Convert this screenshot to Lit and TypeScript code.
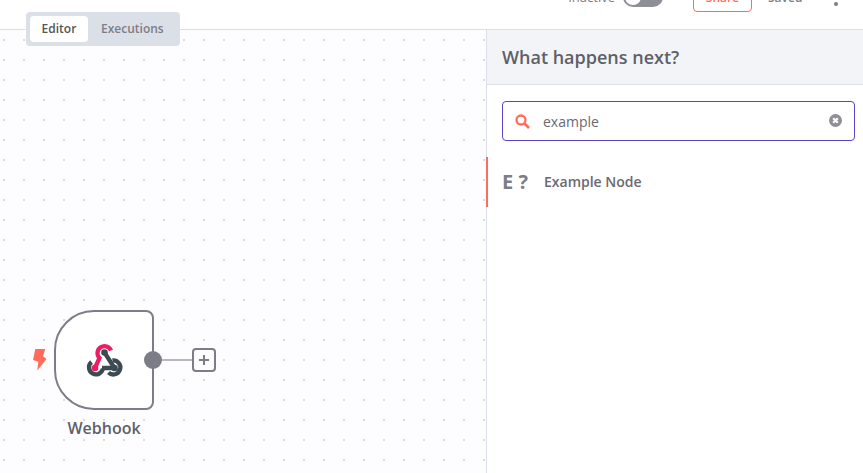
import { LitElement, html, css } from "lit";
import { customElement } from "lit/decorators.js";

@customElement("app-root")
export class AppRoot extends LitElement {
  static styles = css`
    :host { display: block; width: 863px; height: 473px; font-family: "Open Sans", sans-serif; overflow: hidden; position: relative; background: #fff; color: #555; }
    .header { height: 29px; border-bottom: 1px solid #dbdfe7; background: #fff; display: flex; justify-content: flex-end; align-items: flex-end; overflow: hidden; box-sizing: content-box; }
    .hgroup { display: flex; align-items: flex-end; flex: none; }
    .status { font-size: 13px; line-height: 18px; color: #7d7d87; margin-bottom: 23px; font-weight: 400; }
    .toggle { width: 40px; height: 20px; border-radius: 10px; background: #8f8f98; margin-left: 8px; margin-bottom: 22px; position: relative; flex: none; }
    .toggle::after { content: ""; position: absolute; left: 2px; top: 2px; width: 16px; height: 16px; border-radius: 50%; background: #fff; }
    .share { width: 59px; height: 40px; box-sizing: border-box; border: 1px solid #ff6d5a; border-radius: 4px; margin-left: 30px; margin-bottom: 17px; color: #ff6d5a; font-size: 12px; font-weight: 600; display: flex; align-items: flex-end; justify-content: center; line-height: 14px; padding-bottom: 6px; flex: none; }
    .saved { font-size: 12px; font-weight: 600; color: #7d7d87; line-height: 14px; margin-left: 16px; margin-bottom: 24px; width: 36px; flex: none; }
    .dots { width: 4px; height: 4px; border-radius: 50%; background: #7d7d87; margin-left: 30px; margin-right: 25px; margin-bottom: 23px; flex: none; }
    .main { display: flex; height: 443px; }
    .canvas { width: 486px; flex: none; position: relative; background-color: #fdfdff; background-image: radial-gradient(circle at 1px 1px, #d9dbe2 1px, transparent 1.2px); background-size: 20px 20px; background-position: 3px 9px; }
    .tabs { position: absolute; left: 26px; top: 12px; width: 154px; display: flex; padding: 4px; background: #dbdfe7; border-radius: 4px; height: 34px; box-sizing: border-box; z-index: 2; }
    .tab { font-size: 12px; font-weight: 600; line-height: 26px; padding: 0 12px 0 13px; border-radius: 4px; color: #7d7d87; white-space: nowrap; }
    .tab.active { background: #fff; color: #555; width: 58px; padding: 0; text-align: center; flex: none; }
    .node { position: absolute; left: 54px; top: 280px; width: 100px; height: 100px; box-sizing: border-box; border: 2px solid #7d7d87; border-radius: 40px 8px 8px 40px; background: #fff; display: flex; align-items: center; justify-content: center; }
    .node svg { display: block; overflow: visible; }
    .bolt { position: absolute; left: 33px; top: 319px; }
    .handle { position: absolute; left: 144px; top: 321px; width: 18px; height: 18px; border-radius: 50%; background: #7d7d87; }
    .line { position: absolute; left: 162px; top: 329px; width: 31px; height: 2px; background: #b8b8bf; }
    .plus { position: absolute; left: 192px; top: 318px; width: 24px; height: 24px; box-sizing: border-box; border: 2px solid #7d7d87; border-radius: 4px; background: #fdfdff; display: flex; align-items: center; justify-content: center; }
    .label { position: absolute; left: 34px; top: 387px; width: 140px; text-align: center; font-size: 16px; line-height: 22px; font-weight: 600; color: #5f5f68; }
    .panel { flex: 1; border-left: 1px solid #dbdfe7; background: #fff; min-width: 0; }
    .phead { height: 55px; box-sizing: border-box; background: #f3f4f8; border-bottom: 1px solid #dbdfe7; padding: 0 15px; display: flex; align-items: center; font-size: 18px; font-weight: 600; color: #5f5f68; }
    .searchwrap { padding: 16px 8px 16px 15px; }
    .search { height: 40px; box-sizing: border-box; border: 1px solid #5b45c4; border-radius: 4px; display: flex; align-items: center; padding: 0 12px; gap: 13px; font-size: 14px; color: #6a6a72; }
    .search .txt { flex: 1; }
    .search svg { display: block; flex: none; }
    .search .clear { margin-bottom: 2px; }
    .item { height: 50px; display: flex; align-items: center; border-left: 2px solid #ff6d5a; margin-left: -1px; padding: 0 0 2px 14px; box-sizing: border-box; }
    .ic { width: 42px; flex: none; font-size: 20px; font-weight: 700; color: #7d7d87; white-space: pre; }
    .iname { font-size: 14px; font-weight: 600; color: #6a6a72; }
  `;
  render() {
    return html`
      <div class="header">
        <div class="hgroup">
          <span class="status">Inactive</span>
          <span class="toggle"></span>
          <span class="share">Share</span>
          <span class="saved">Saved</span>
          <span class="dots"></span>
        </div>
      </div>
      <div class="tabs">
        <div class="tab active">Editor</div>
        <div class="tab">Executions</div>
      </div>
      <div class="main">
        <div class="canvas">
          <svg class="bolt" width="14" height="22" viewBox="0 0 14 22"><path d="M2.300 0h10L10 7.300 13.500 10 4.300 21.500 5.300 12.700 0 11z" fill="#ff6d5a"/></svg>
          <div class="node">
            <svg width="35" height="32" viewBox="0 0 35 32" fill="none" stroke-width="4.300">
              <path d="M4.500 18A7 7 0 1 0 15.900 24.500" stroke="#3d4a54"/>
              <path d="M25.500 16.500A7 7 0 1 1 21.500 28.500" stroke="#3d4a54"/>
              <path d="M17.500 8.500L27.500 24H15" stroke="#3d4a54"/>
              <circle cx="17.500" cy="8.500" r="3.300" fill="#3d4a54"/>
              <circle cx="27.500" cy="24" r="3.300" fill="#3d4a54"/>
              <path d="M8 24L12.500 14A7 7 0 1 1 24 6.500" stroke="#ea1f63"/>
              <circle cx="8" cy="24" r="3.300" fill="#ea1f63"/>
            </svg>
          </div>
          <div class="handle"></div>
          <div class="line"></div>
          <div class="plus">
            <svg width="12" height="12" viewBox="0 0 12 12"><path d="M6 1v10M1 6h10" stroke="#7d7d87" stroke-width="2"/></svg>
          </div>
          <div class="label">Webhook</div>
        </div>
        <div class="panel">
          <div class="phead">What happens next?</div>
          <div class="searchwrap">
            <div class="search">
              <svg width="15" height="15" viewBox="0 0 15 15" fill="none"><circle cx="6" cy="6" r="4.500" stroke="#ff6d5a" stroke-width="2.300"/><path d="M9.500 9.500L14 14" stroke="#ff6d5a" stroke-width="2.600"/></svg>
              <span class="txt">example</span>
              <svg class="clear" width="13" height="13" viewBox="0 0 13 13"><circle cx="6.500" cy="6.500" r="6.500" fill="#8f8f98"/><path d="M4.200 4.200l4.600 4.600M8.800 4.200l-4.600 4.600" stroke="#fff" stroke-width="2.200"/></svg>
            </div>
          </div>
          <div class="item">
            <span class="ic">E ?</span>
            <span class="iname">Example Node</span>
          </div>
        </div>
      </div>
    `;
  }
}
